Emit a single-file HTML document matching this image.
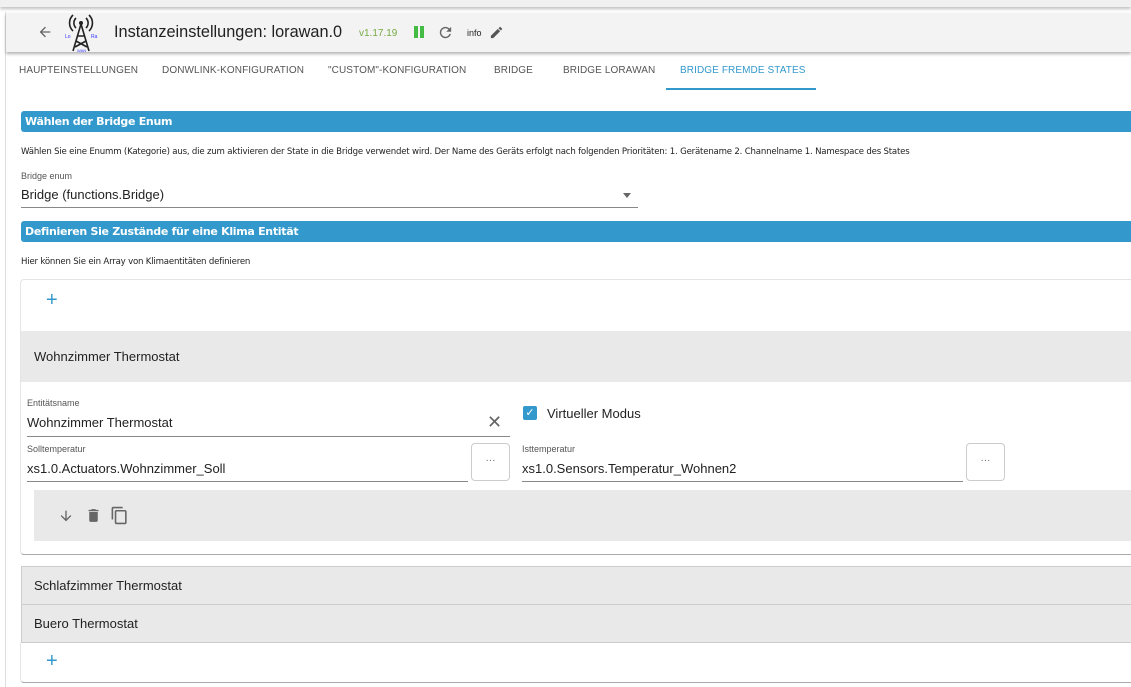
<!DOCTYPE html>
<html><head><meta charset="utf-8"><style>
*{box-sizing:border-box;margin:0;padding:0}
body{width:1131px;height:687px;overflow:hidden;background:#fff;font-family:"Liberation Sans",Arial,sans-serif;color:#222;position:relative}
.a{position:absolute}
.top{left:0;top:0;width:1131px;height:7px;background:#f0f0f0;box-shadow:0 2px 3px rgba(0,0,0,.25)}
.lb{left:5px;top:12px;width:1px;height:675px;background:#ddd}
.hdr{left:6px;top:13px;width:1125px;height:39px;background:#f3f3f3;box-shadow:0 2px 3px rgba(0,0,0,.3)}
.tab{top:65px;font-size:10px;color:#555;letter-spacing:.1px}
.bar{left:21px;width:1110px;height:21px;background:#3399cc;border-radius:3px 0 0 3px;color:#fff;font-weight:bold;font-size:11px;padding:4px 0 0 4px;font-family:"DejaVu Sans",sans-serif;letter-spacing:-.3px}
.sm{font-size:8.6px;font-family:"DejaVu Sans",sans-serif;color:#222;letter-spacing:-.2px}
.lbl{font-size:9px;color:#555}
.val{font-size:13px;color:#222}
.line{height:1px;background:#888}
.gray{background:#e9e9e9}
.btn{width:39px;height:38px;border:1px solid #ccc;border-radius:4px;font-size:10px;color:#666;text-align:center;line-height:34px}
</style></head><body>
<div class="a top"></div>
<div class="a lb"></div>
<div class="a hdr"></div>
<svg class="a" style="left:37px;top:24px" width="16" height="16" viewBox="0 0 24 24"><path d="M20 11H7.8l5.6-5.6L12 4l-8 8 8 8 1.4-1.4L7.8 13H20z" fill="#666"/></svg>
<svg class="a" style="left:64px;top:14px" width="34" height="38" viewBox="0 0 34 38"><g fill="none" stroke="#222" stroke-width="1.6"><path d="M17 10 L9 37 M17 10 L25 37 M12 27 L23 33 M22 27 L11 33 M13 22 L21 22"/><path d="M12 4 A7 7 0 0 0 12 14 M22 4 A7 7 0 0 1 22 14 M9 1 A11 11 0 0 0 9 17 M25 1 A11 11 0 0 1 25 17"/></g><circle cx="17" cy="9" r="2" fill="#222"/><text x="1" y="24" font-size="5" fill="#33f">Lo</text><text x="27" y="24" font-size="5" fill="#33f">Ra</text><text x="13" y="38" font-size="4" fill="#33f">WAN</text></svg>
<div class="a" style="left:114px;top:23px;font-size:16.3px;color:#222">Instanzeinstellungen: lorawan.0</div>
<div class="a" style="left:359px;top:28px;font-size:10px;color:#77aa44">v1.17.19</div>
<div class="a" style="left:414px;top:26px;width:4px;height:12px;background:#44bb44"></div>
<div class="a" style="left:420px;top:26px;width:4px;height:12px;background:#44bb44"></div>
<svg class="a" style="left:437px;top:24px" width="17" height="17" viewBox="0 0 24 24"><path d="M17.6 6.4A8 8 0 1 0 19.7 14h-2.1a6 6 0 1 1-1.4-6.2L13 11h7V4z" fill="#666"/></svg>
<div class="a" style="left:467px;top:28px;font-size:9px;color:#222">info</div>
<svg class="a" style="left:489px;top:25px" width="15" height="15" viewBox="0 0 24 24"><path d="M3 17.2V21h3.8L17.8 9.9l-3.7-3.7zM20.7 7c.4-.4.4-1 0-1.4l-2.3-2.3c-.4-.4-1-.4-1.4 0l-1.8 1.8 3.7 3.7z" fill="#555"/></svg>
<div class="a tab" style="left:19px">HAUPTEINSTELLUNGEN</div>
<div class="a tab" style="left:162px">DONWLINK-KONFIGURATION</div>
<div class="a tab" style="left:328px">"CUSTOM"-KONFIGURATION</div>
<div class="a tab" style="left:494px">BRIDGE</div>
<div class="a tab" style="left:563px">BRIDGE LORAWAN</div>
<div class="a tab" style="left:680px;color:#3399cc">BRIDGE FREMDE STATES</div>
<div class="a" style="left:666px;top:88px;width:150px;height:2px;background:#3399cc"></div>
<div class="a bar" style="top:111px">Wählen der Bridge Enum</div>
<div class="a sm" style="left:21px;top:147px">Wählen Sie eine Enumm (Kategorie) aus, die zum aktivieren der State in die Bridge verwendet wird. Der Name des Geräts erfolgt nach folgenden Prioritäten: 1. Gerätename 2. Channelname 1. Namespace des States</div>
<div class="a lbl" style="left:21px;top:171px">Bridge enum</div>
<div class="a val" style="left:21px;top:187px">Bridge (functions.Bridge)</div>
<div class="a" style="left:623px;top:193px;border:4px solid transparent;border-top:5px solid #666"></div>
<div class="a line" style="left:21px;top:207px;width:617px"></div>
<div class="a bar" style="top:221px">Definieren Sie Zustände für eine Klima Entität</div>
<div class="a sm" style="left:21px;top:257px">Hier können Sie ein Array von Klimaentitäten definieren</div>
<div class="a" style="left:20px;top:279px;width:1120px;height:276px;border:1px solid #e4e4e4;border-bottom:1px solid #aaa;border-radius:4px"></div>
<div class="a" style="left:46px;top:289px;font-size:20px;color:#3399cc">+</div>
<div class="a gray" style="left:21px;top:331px;width:1110px;height:51px"></div>
<div class="a val" style="left:34px;top:349px">Wohnzimmer Thermostat</div>
<div class="a lbl" style="left:27px;top:398px">Entitätsname</div>
<div class="a val" style="left:27px;top:415px">Wohnzimmer Thermostat</div>
<div class="a" style="left:487px;top:412px;font-size:18px;color:#666">✕</div>
<div class="a line" style="left:27px;top:436px;width:483px"></div>
<div class="a" style="left:523px;top:406px;width:14px;height:14px;background:#3399cc;border-radius:2px;color:#fff;font-size:11px;text-align:center;line-height:14px">✓</div>
<div class="a val" style="left:547px;top:406px">Virtueller Modus</div>
<div class="a lbl" style="left:27px;top:444px">Solltemperatur</div>
<div class="a val" style="left:27px;top:461px">xs1.0.Actuators.Wohnzimmer_Soll</div>
<div class="a line" style="left:27px;top:481px;width:441px"></div>
<div class="a btn" style="left:471px;top:443px">···</div>
<div class="a lbl" style="left:522px;top:444px">Isttemperatur</div>
<div class="a val" style="left:522px;top:461px">xs1.0.Sensors.Temperatur_Wohnen2</div>
<div class="a line" style="left:522px;top:481px;width:441px"></div>
<div class="a btn" style="left:966px;top:443px">···</div>
<div class="a gray" style="left:34px;top:490px;width:1097px;height:51px"></div>
<svg class="a" style="left:58px;top:508px" width="16" height="16" viewBox="0 0 24 24"><path d="M20 12l-1.4-1.4-5.6 5.6V4h-2v12.2l-5.6-5.6L4 12l8 8z" fill="#666"/></svg>
<svg class="a" style="left:85px;top:507px" width="17" height="17" viewBox="0 0 24 24"><path d="M6 19c0 1.1.9 2 2 2h8c1.1 0 2-.9 2-2V7H6zM19 4h-3.5l-1-1h-5l-1 1H5v2h14z" fill="#666"/></svg>
<svg class="a" style="left:110px;top:506px" width="19" height="19" viewBox="0 0 24 24"><path d="M16 1H4c-1.1 0-2 .9-2 2v14h2V3h12zm3 4H8c-1.1 0-2 .9-2 2v14c0 1.1.9 2 2 2h11c1.1 0 2-.9 2-2V7c0-1.1-.9-2-2-2zm0 16H8V7h11z" fill="#666"/></svg>
<div class="a gray" style="left:21px;top:566px;width:1110px;height:77px;border:1px solid #ccc;border-right:none"></div>
<div class="a" style="left:21px;top:604px;width:1110px;height:1px;background:#ccc"></div>
<div class="a val" style="left:34px;top:578px">Schlafzimmer Thermostat</div>
<div class="a val" style="left:34px;top:616px">Buero Thermostat</div>
<div class="a" style="left:20px;top:643px;width:1120px;height:40px;border:1px solid #e4e4e4;border-top:none;border-bottom:1px solid #aaa;border-radius:0 0 4px 4px"></div>
<div class="a" style="left:46px;top:650px;font-size:20px;color:#3399cc">+</div>
</body></html>
